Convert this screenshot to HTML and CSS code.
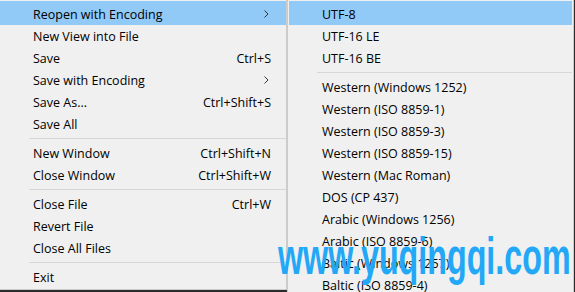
FILE: index.html
```html
<!DOCTYPE html>
<html>
<head>
	<meta charset="UTF-8">
	<title>File Menu</title>
	<link rel="stylesheet" href="styles.css">
</head>
<body>
	<div class="screen">
		<ul class="menu menu-main">
			<li class="item active first"><span class="label">Reopen with Encoding</span><svg class="arrow" width="5" height="8" viewBox="0 0 5 8"><path d="M0.5 0.5 L4 4 L0.5 7.5" fill="none" stroke="#333" stroke-width="1"/></svg></li>
			<li class="item"><span class="label">New View into File</span></li>
			<li class="item"><span class="label">Save</span><span class="key">Ctrl+S</span></li>
			<li class="item"><span class="label">Save with Encoding</span><svg class="arrow" width="5" height="8" viewBox="0 0 5 8"><path d="M0.5 0.5 L4 4 L0.5 7.5" fill="none" stroke="#333" stroke-width="1"/></svg></li>
			<li class="item"><span class="label">Save As...</span><span class="key">Ctrl+Shift+S</span></li>
			<li class="item"><span class="label">Save All</span></li>
			<li class="sep"></li>
			<li class="item"><span class="label">New Window</span><span class="key">Ctrl+Shift+N</span></li>
			<li class="item"><span class="label">Close Window</span><span class="key">Ctrl+Shift+W</span></li>
			<li class="sep"></li>
			<li class="item"><span class="label">Close File</span><span class="key">Ctrl+W</span></li>
			<li class="item"><span class="label">Revert File</span></li>
			<li class="item"><span class="label">Close All Files</span></li>
			<li class="sep"></li>
			<li class="item"><span class="label">Exit</span></li>
		</ul>
		<ul class="menu menu-sub">
			<li class="item active first"><span class="label">UTF-8</span></li>
			<li class="item"><span class="label">UTF-16 LE</span></li>
			<li class="item"><span class="label">UTF-16 BE</span></li>
			<li class="sep"></li>
			<li class="item"><span class="label">Western (Windows 1252)</span></li>
			<li class="item"><span class="label">Western (ISO 8859-1)</span></li>
			<li class="item"><span class="label">Western (ISO 8859-3)</span></li>
			<li class="item"><span class="label">Western (ISO 8859-15)</span></li>
			<li class="item"><span class="label">Western (Mac Roman)</span></li>
			<li class="item"><span class="label">DOS (CP 437)</span></li>
			<li class="item"><span class="label">Arabic (Windows 1256)</span></li>
			<li class="item"><span class="label">Arabic (ISO 8859-6)</span></li>
			<li class="item"><span class="label">Baltic (Windows 1257)</span></li>
			<li class="item"><span class="label">Baltic (ISO 8859-4)</span></li>
		</ul>
		<div class="watermark">www.yuqingqi.com</div>
	</div>
</body>
</html>
```

FILE: styles.css
```css
body {
	margin: 0;
	padding: 0;
	background-color: #2b2b2b;
	font-family: "Open Sans", "Noto Sans CJK SC", sans-serif;
	font-size: 12.5px;
	color: #000000;
}

.screen {
	position: relative;
	display: flex;
	align-items: flex-start;
	width: 575px;
	height: 292px;
	overflow: hidden;
}

.menu {
	list-style: none;
	margin: 0;
	padding: 3px 0 0 0;
	background-color: #f0f0f0;
}

.menu-main {
	width: 286px;
	height: 286px;
	border-right: 1px solid #cccccc;
	border-bottom: 1px solid #cccccc;
}

.menu-sub {
	width: 285px;
	height: 300px;
	border: 1px solid #cccccc;
	border-top: none;
	padding-top: 3px;
}

.item {
	display: flex;
	align-items: center;
	height: 22px;
	padding: 0 15px 0 33px;
}

.menu-sub .item {
	padding-left: 34px;
}

.item.first {
	margin-top: -2px;
	height: 24px;
	padding-top: 2px;
	box-sizing: border-box;
}

.item.active {
	background-color: #91c9f7;
}

.menu-sub .item.active {
	margin-left: 1px;
	margin-right: 1px;
	padding-left: 33px;
}

.label {
	flex: 1;
	white-space: nowrap;
}

.key {
	white-space: nowrap;
}

.arrow {
	margin-right: 2px;
}

.sep {
	height: 7px;
	margin-left: 29px;
	box-sizing: border-box;
	border-bottom: 1px solid #d7d7d7;
	transform: translateY(-3px);
}

.menu-sub .sep {
	margin-left: 29px;
	margin-right: 1px;
}

.watermark {
	position: absolute;
	left: 278px;
	top: 226px;
	font-family: "Liberation Sans", sans-serif;
	font-weight: bold;
	font-size: 52px;
	color: #22a8f6;
	transform: scaleX(0.62);
	transform-origin: left top;
	white-space: nowrap;
}
```
